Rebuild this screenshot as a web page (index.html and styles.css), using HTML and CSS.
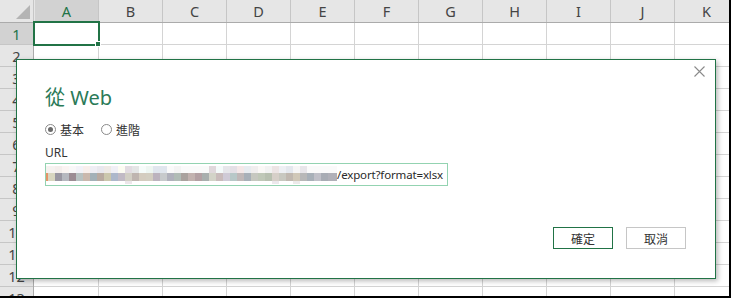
FILE: index.html
```html
<!DOCTYPE html>
<html lang="zh-Hant">
<head>
<meta charset="utf-8">
<title>從 Web</title>
<link rel="stylesheet" href="styles.css">
</head>
<body>
<div class="sheet">
  <div class="corner"><span class="tri"></span></div>
  <div class="colheads">
    <div class="ch sel">A</div><div class="ch">B</div><div class="ch">C</div><div class="ch">D</div><div class="ch">E</div><div class="ch">F</div><div class="ch">G</div><div class="ch">H</div><div class="ch">I</div><div class="ch">J</div><div class="ch">K</div>
  </div>
  <div class="rowheads">
    <div class="rh sel">1</div><div class="rh">2</div><div class="rh">3</div><div class="rh">4</div><div class="rh">5</div><div class="rh">6</div><div class="rh">7</div><div class="rh">8</div><div class="rh">9</div><div class="rh">10</div><div class="rh">11</div><div class="rh">12</div><div class="rh">13</div>
  </div>
  <div class="cells"></div>

  <div class="selection"><span class="handle"></span></div>

  <div class="dialog">
    <button class="close" aria-label="關閉">
      <svg width="11" height="11" viewBox="0 0 11 11"><path d="M0.5 0.5 L10.5 10.5 M10.5 0.5 L0.5 10.5" stroke="#8a8a8a" stroke-width="1.1" fill="none"/></svg>
    </button>
    <h1 class="title">從 Web</h1>
    <div class="radios">
      <label class="radio"><span class="dot on"></span>基本</label>
      <label class="radio"><span class="dot"></span>進階</label>
    </div>
    <div class="label">URL</div>
    <div class="input">
      <div class="mosaic"><div class="m1"></div><div class="m2"></div><div class="m3"></div></div>
      <span class="urltext">/export?format=xlsx</span>
    </div>
    <div class="actions">
      <button class="btn primary">確定</button>
      <button class="btn">取消</button>
    </div>
  </div>
</div>
</body>
</html>
```

FILE: styles.css
```css
* { box-sizing: border-box; }
html, body { margin: 0; padding: 0; background: #fff; }
body { font-family: "Noto Sans", "Open Sans", "Noto Sans CJK TC", sans-serif; }

.sheet {
  position: relative;
  width: 731px;
  height: 298px;
  overflow: hidden;
  display: grid;
  grid-template-columns: 34px 1fr;
  grid-template-rows: 23px 1fr;
  border-right: 2px solid #000;
  border-bottom: 2px solid #000;
  background: #fff;
}

.corner {
  background: #e6e6e6;
  border-right: 1px solid #c6c6c6;
  border-bottom: 1px solid #ababab;
  position: relative;
}
.tri {
  position: absolute;
  right: 3px;
  bottom: 3px;
  width: 0; height: 0;
  border-left: 14px solid transparent;
  border-bottom: 14px solid #b4b4b4;
}

.colheads {
  display: flex;
  background: #e6e6e6;
  border-bottom: 1px solid #ababab;
  padding-left: 1px;
}
.ch {
  flex: 0 0 64px;
  border-right: 1px solid #c6c6c6;
  display: flex;
  align-items: center;
  justify-content: center;
  font-size: 14.5px;
  color: #444;
}
.ch.sel { background: #d2d2d2; color: #217346; }

.rowheads {
  display: flex;
  flex-direction: column;
  background: #e6e6e6;
  border-right: 1px solid #ababab;
}
.rh {
  flex: 0 0 22px;
  border-bottom: 1px solid #c6c6c6;
  display: flex;
  align-items: center;
  justify-content: center;
  font-size: 14.5px;
  color: #444;
}
.rh.sel { background: #d2d2d2; color: #217346; }

.cells {
  background-image:
    repeating-linear-gradient(to right, transparent 0 63px, #d4d4d4 63px 64px),
    repeating-linear-gradient(to bottom, transparent 0 21px, #d4d4d4 21px 22px);
  background-position: 1px 0, 0 0;
}

.selection {
  position: absolute;
  left: 33px;
  top: 21px;
  width: 67px;
  height: 25px;
  border: 2px solid #217346;
}
.handle {
  position: absolute;
  right: -3px;
  bottom: -3px;
  width: 6px;
  height: 6px;
  background: #217346;
  border: 1px solid #fff;
}

.dialog {
  position: absolute;
  left: 16px;
  top: 59px;
  width: 700px;
  height: 220px;
  background: #fff;
  border: 1px solid #217346;
  box-shadow: 2px 2px 5px rgba(0,0,0,0.28);
  display: flex;
  flex-direction: column;
  padding: 25px 29px 29px 28px;
}

.close {
  position: absolute;
  right: 10px;
  top: 6px;
  width: 11px;
  height: 11px;
  padding: 0;
  border: 0;
  background: none;
  display: flex;
}

.title {
  margin: 0;
  font-weight: normal;
  font-size: 20px;
  line-height: 26px;
  color: #2b7a58;
  font-family: "Noto Sans", "Noto Sans CJK TC", sans-serif;
}

.radios {
  display: flex;
  gap: 17px;
  margin-top: 10px;
  height: 16px;
  align-items: center;
}
.radio {
  display: flex;
  align-items: center;
  gap: 4px;
  font-size: 12px;
  color: #333;
  font-family: "Noto Sans CJK TC", sans-serif;
}
.dot {
  width: 11px;
  height: 11px;
  border: 1px solid #8a8a8a;
  border-radius: 50%;
  display: flex;
  align-items: center;
  justify-content: center;
}
.dot.on::after {
  content: "";
  width: 5px;
  height: 5px;
  border-radius: 50%;
  background: #6a6a6a;
}

.label {
  margin-top: 8px;
  font-size: 12px;
  line-height: 16px;
  color: #333;
}

.input {
  margin-top: 2px;
  width: 403px;
  height: 23px;
  border: 1px solid #93d3b1;
  display: flex;
  align-items: center;
}
.mosaic {
  flex: 0 0 291px;
  width: 291px;
  height: 18px;
  display: flex;
  flex-direction: column;
  margin-top: 1px;
}
.m1 { height: 7px; background: linear-gradient(to right,
  #f6f2f0 0 9px, #f4eeec 9px 16px, #faf4f2 16px 23px, #f8f8f8 23px 30px, #f2f2f8 30px 37px, #f8efec 37px 44px,
  #eeeef4 44px 51px, #e8e8ee 51px 58px, #eeeae6 58px 65px, #f0f0f6 65px 72px, #fcfcf2 72px 79px, #e2dce2 79px 86px,
  #e4e6e6 86px 93px, #f6fcfa 93px 100px, #eef6f2 100px 107px, #e0e6ee 107px 121px, #fafafa 121px 128px, #f4f4f4 128px 135px,
  #fafafa 135px 163px, #e0d8dc 163px 170px, #f4fafa 170px 177px, #e6e6ea 177px 184px, #e4e0e6 184px 191px, #f4e8e8 191px 198px,
  #e8ecf0 198px 205px, #f0eeee 205px 212px, #faf8f6 212px 219px, #f2f2f2 219px 226px, #ece4e4 226px 233px, #eef0f4 233px 240px,
  #e4e8ee 240px 247px, #f6f6f6 247px 254px, #e8e6ea 254px 261px, #fafafa 261px 291px); }
.m2 { height: 8px; background: linear-gradient(to right,
  #e49468 0 2px, #d8d6c0 2px 9px, #9a97a2 9px 16px, #b6b8bf 16px 23px, #9b8c93 23px 30px, #b8c2c2 30px 37px, #cab8ad 37px 44px,
  #a3b1b8 44px 51px, #b8aaa1 51px 58px, #cbc7ad 58px 65px, #adb8cb 65px 72px, #c1bac5 72px 79px, #d2cfc5 79px 86px,
  #bfb5b0 86px 93px, #d4ccbf 93px 100px, #d3cec1 100px 107px, #bcb3be 107px 114px, #c7cacc 114px 121px, #b0b1bc 121px 128px,
  #b1bcb6 128px 135px, #aaa29e 135px 142px, #c2b2af 142px 149px, #b3a0a3 149px 156px, #a9afae 156px 163px, #d3d3c8 163px 170px,
  #c9bbbb 170px 177px, #cfcad6 177px 184px, #b8c8c8 184px 191px, #c0b8b8 191px 198px, #a8b0b8 198px 205px, #c6c8c0 205px 212px,
  #c0c8b8 212px 219px, #b8c0b0 219px 226px, #d6cfc8 226px 233px, #c8c8c0 233px 240px, #c0b8b0 240px 247px, #d0c8b8 247px 254px,
  #b8b8b8 254px 261px, #a8b0b8 261px 268px, #c0c0c8 268px 275px, #a8acb4 275px 282px, #b0b0b8 282px 291px); }
.m3 { height: 3px; background: linear-gradient(to right,
  #fff 0 79px, #ece6ea 79px 86px, #fff 86px 226px, #ece8ec 226px 233px, #fff 233px 247px, #eceaea 247px 254px, #fff 254px 291px); }

.urltext {
  font-size: 11.5px;
  letter-spacing: -0.15px;
  color: #2a2a2a;
  white-space: nowrap;
}

.actions {
  margin-top: auto;
  display: flex;
  justify-content: flex-end;
  gap: 13px;
}
.btn {
  width: 60px;
  height: 22px;
  padding: 0;
  background: #fff;
  border: 1px solid #c6c6c6;
  font-family: "Noto Sans CJK TC", sans-serif;
  font-size: 12px;
  color: #333;
}
.btn.primary { border-color: #217346; }
```
